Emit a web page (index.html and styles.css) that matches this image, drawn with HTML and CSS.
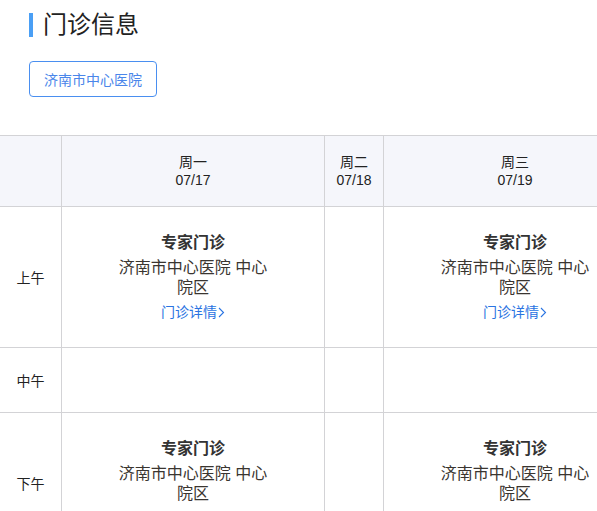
FILE: index.html
```html
<!DOCTYPE html>
<html lang="zh-CN">
<head>
<meta charset="utf-8">
<title>门诊信息</title>
<link rel="stylesheet" href="styles.css">
</head>
<body>
<div class="page">
  <h1 class="title"><span class="title-bar"></span>门诊信息</h1>
  <div class="tabs"><button class="tab">济南市中心医院</button></div>
  <div class="schedule-wrap">
    <div class="schedule">
      <div class="cell head"></div>
      <div class="cell head"><div>周一</div><div>07/17</div></div>
      <div class="cell head"><div>周二</div><div>07/18</div></div>
      <div class="cell head"><div>周三</div><div>07/19</div></div>

      <div class="cell label row-am">上午</div>
      <div class="cell row-am">
        <div class="clinic">
          <div class="clinic-title">专家门诊</div>
          <div class="clinic-place">济南市中心医院 中心院区</div>
          <a class="clinic-link" href="#">门诊详情<svg class="chev" width="7" height="11" viewBox="0 0 7 11"><path d="M1 1 L5.5 5.5 L1 10" fill="none" stroke="currentColor" stroke-width="1.1"/></svg></a>
        </div>
      </div>
      <div class="cell row-am"></div>
      <div class="cell row-am">
        <div class="clinic">
          <div class="clinic-title">专家门诊</div>
          <div class="clinic-place">济南市中心医院 中心院区</div>
          <a class="clinic-link" href="#">门诊详情<svg class="chev" width="7" height="11" viewBox="0 0 7 11"><path d="M1 1 L5.5 5.5 L1 10" fill="none" stroke="currentColor" stroke-width="1.1"/></svg></a>
        </div>
      </div>

      <div class="cell label row-noon">中午</div>
      <div class="cell row-noon"></div>
      <div class="cell row-noon"></div>
      <div class="cell row-noon"></div>

      <div class="cell label row-am">下午</div>
      <div class="cell row-am">
        <div class="clinic">
          <div class="clinic-title">专家门诊</div>
          <div class="clinic-place">济南市中心医院 中心院区</div>
          <a class="clinic-link" href="#">门诊详情<svg class="chev" width="7" height="11" viewBox="0 0 7 11"><path d="M1 1 L5.5 5.5 L1 10" fill="none" stroke="currentColor" stroke-width="1.1"/></svg></a>
        </div>
      </div>
      <div class="cell row-am"></div>
      <div class="cell row-am">
        <div class="clinic">
          <div class="clinic-title">专家门诊</div>
          <div class="clinic-place">济南市中心医院 中心院区</div>
          <a class="clinic-link" href="#">门诊详情<svg class="chev" width="7" height="11" viewBox="0 0 7 11"><path d="M1 1 L5.5 5.5 L1 10" fill="none" stroke="currentColor" stroke-width="1.1"/></svg></a>
        </div>
      </div>
    </div>
  </div>
</div>
</body>
</html>
```
FILE: styles.css
```css
html, body {
  margin: 0;
  padding: 0;
  background: #fff;
}
body {
  font-family: "Liberation Sans", "Noto Sans CJK SC", sans-serif;
  color: #333;
  overflow: hidden;
}
.page {
  width: 597px;
  overflow: hidden;
}
.title {
  display: flex;
  align-items: center;
  margin: 0;
  padding: 10px 0 0 29px;
  height: 30px;
  font-size: 24px;
  line-height: 30px;
  font-weight: normal;
  color: #222;
}
.title-bar {
  display: inline-block;
  width: 4px;
  height: 24px;
  background: #4a9ff5;
  margin-right: 10px;
}
.tabs {
  padding: 21px 0 0 29px;
  height: 36px;
}
.tab {
  box-sizing: border-box;
  height: 36px;
  width: 128px;
  padding: 0;
  border: 1px solid #4a8ff0;
  border-radius: 4px;
  background: #fff;
  color: #4a86ea;
  font-family: inherit;
  font-size: 14px;
}
.schedule-wrap {
  margin-top: 38px;
  width: 700px;
}
.schedule {
  display: grid;
  grid-template-columns: 62px 263px 59px 263px;
  border-top: 1px solid #d3d3d6;
}
.cell {
  box-sizing: border-box;
  border-right: 1px solid #d3d3d6;
  border-bottom: 1px solid #d3d3d6;
  display: flex;
  flex-direction: column;
  align-items: center;
  justify-content: center;
  text-align: center;
}
.head {
  height: 71px;
  background: #f5f6fb;
  font-size: 14px;
  line-height: 18px;
  color: #222;
}
.label {
  font-size: 14px;
  color: #222;
}
.row-am {
  height: 141px;
}
.row-noon {
  height: 65px;
}
.clinic {
  width: 152px;
  text-align: center;
}
.clinic-title {
  font-size: 16px;
  line-height: 22px;
  font-weight: bold;
  color: #333;
  margin-bottom: 4px;
}
.clinic-place {
  font-size: 16px;
  line-height: 20px;
  color: #3a3530;
}
.clinic-link {
  display: inline-flex;
  align-items: center;
  margin-top: 4px;
  font-size: 14px;
  line-height: 20px;
  color: #2a74e2;
  text-decoration: none;
}
.chev {
  margin-left: 1px;
}
```
